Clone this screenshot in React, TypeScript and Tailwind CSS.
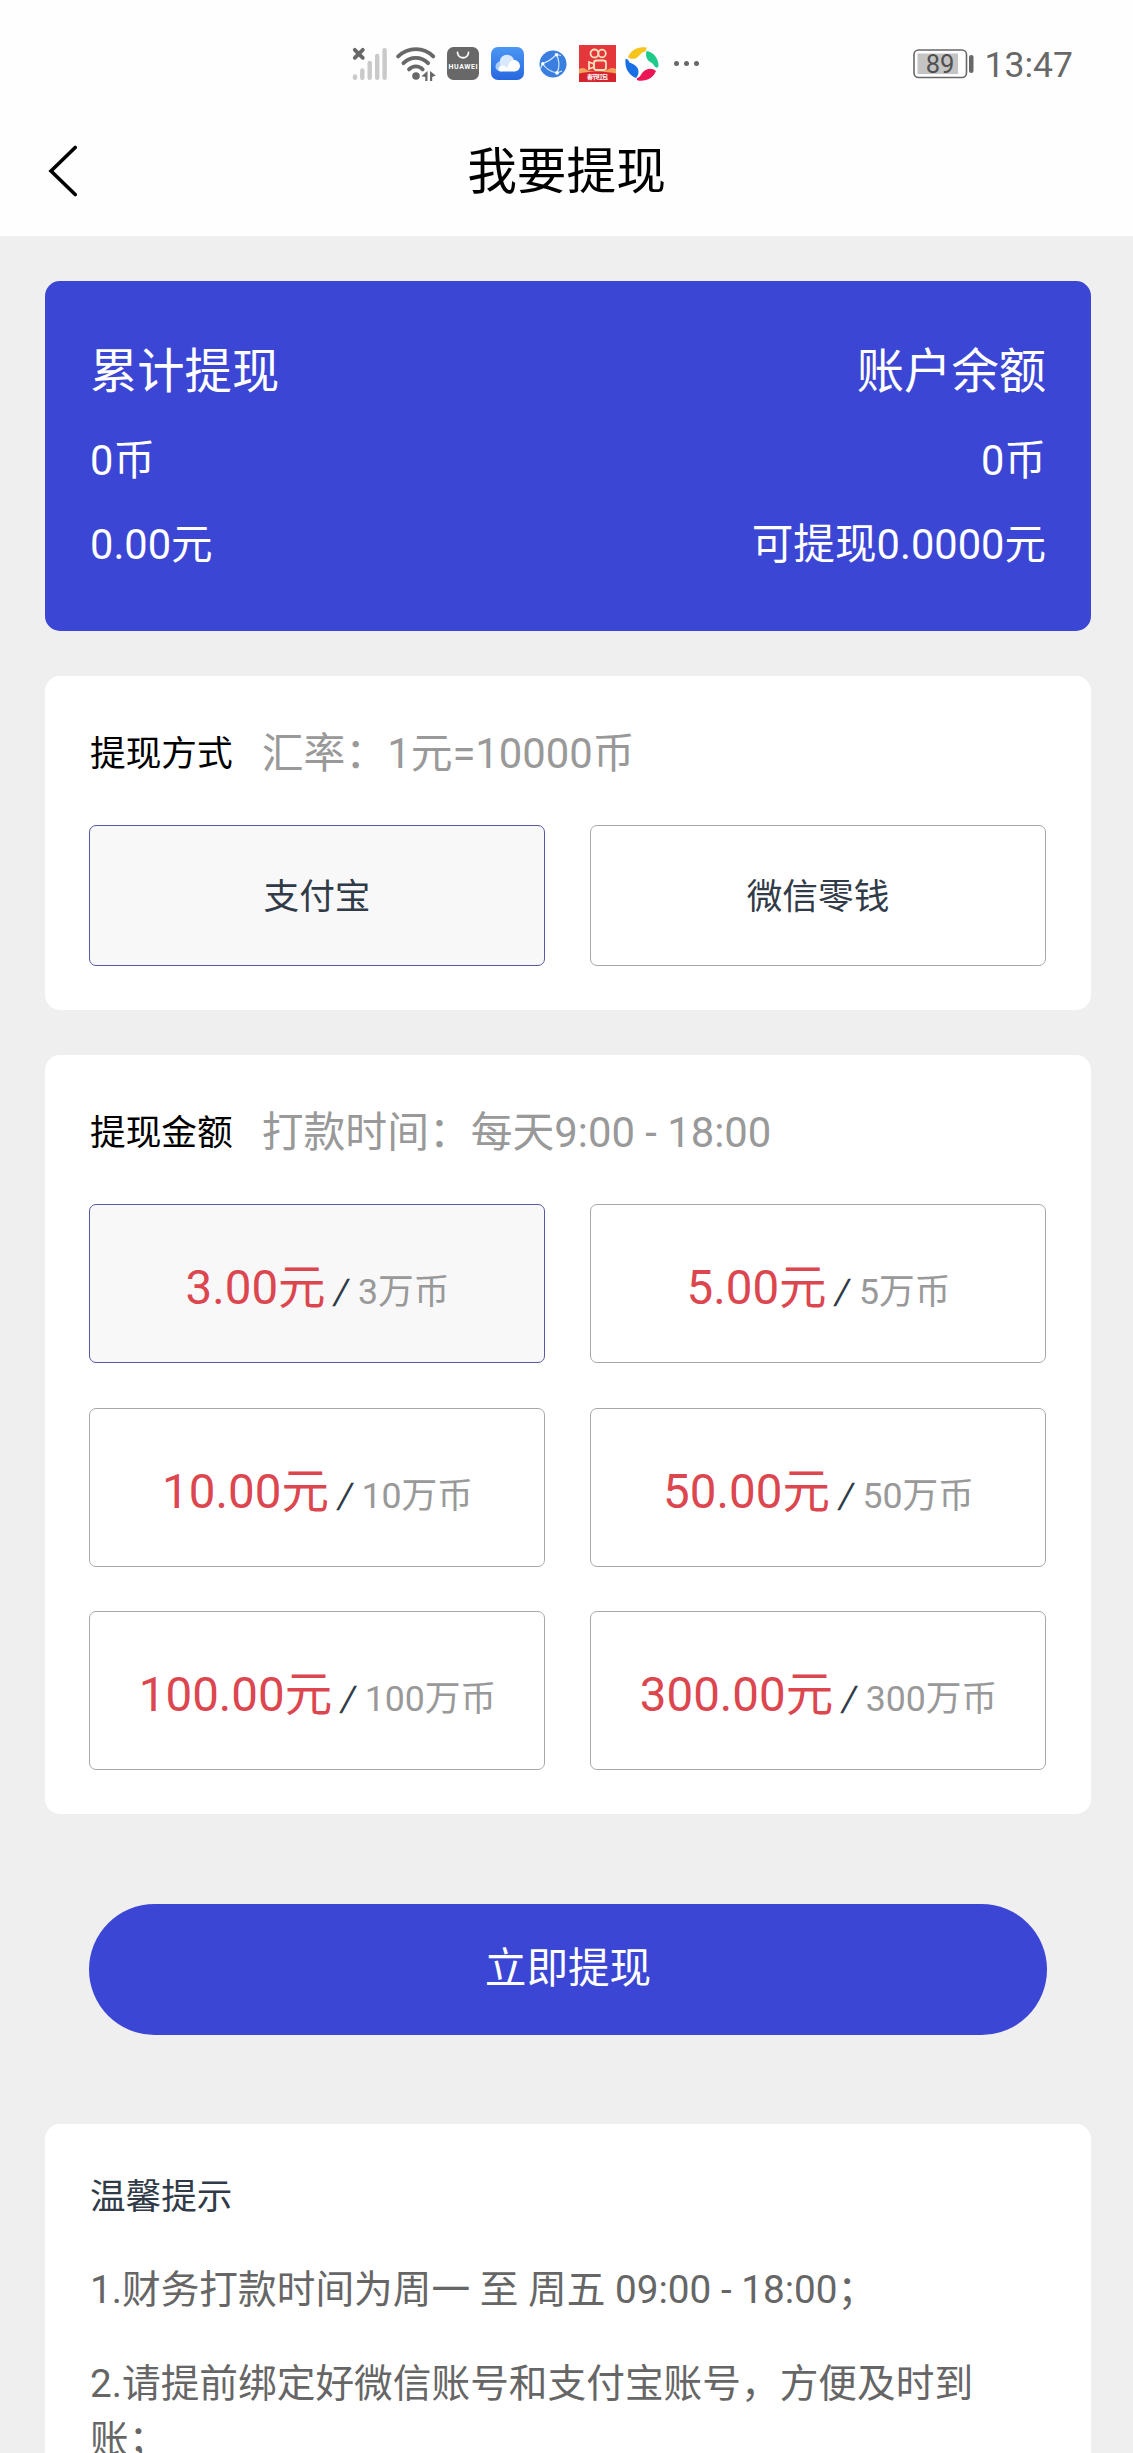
import { useState } from 'react'
import { clsx } from 'clsx'

const METHODS = ['支付宝', '微信零钱']

const AMOUNTS = [
  { price: '3.00元', coins: '3万币' },
  { price: '5.00元', coins: '5万币' },
  { price: '10.00元', coins: '10万币' },
  { price: '50.00元', coins: '50万币' },
  { price: '100.00元', coins: '100万币' },
  { price: '300.00元', coins: '300万币' },
]

const TIPS = [
  '1.财务打款时间为周一 至 周五 09:00 - 18:00；',
  '2.请提前绑定好微信账号和支付宝账号，方便及时到账；',
]

function SignalIcon() {
  return (
    <svg width="36" height="34" viewBox="0 0 36 34" fill="none" strokeLinecap="round">
      <g stroke="#c9c9c9" strokeWidth="4.4">
        <path d="M3 29.5v1.3M10.3 23.5v7.3M17.7 16v14.8M25.2 9v21.8M32.6 3.3v27.5" />
      </g>
      <path d="M2.8 2.8l8 8M10.8 2.8l-8 8" stroke="#686868" strokeWidth="3.8" />
    </svg>
  )
}

function WifiIcon() {
  return (
    <svg width="40" height="34" viewBox="0 0 40 34" fill="none">
      <g stroke="#686868" strokeWidth="3.8" strokeLinecap="round">
        <path d="M2.2 9.4C12-.4 28-.4 37.2 9.4" />
        <path d="M7.4 16.2c7-7 17.7-7 24.7 0" />
        <path d="M13 22.4c4-4 9.7-4 13.7 0" />
      </g>
      <circle cx="20" cy="29" r="3.8" fill="#686868" />
      <path d="M31.5 24v10h-2.2v-4l-3.8-.8z" fill="#686868" />
      <path d="M34 24v10h2.2v-4l3.5-1.5z" fill="#686868" />
    </svg>
  )
}

function HuaweiIcon() {
  return (
    <svg width="32" height="33" viewBox="0 0 32 33">
      <rect width="32" height="33" rx="6.5" fill="#686868" />
      <path d="M10.5 5.5c.4 7 10.6 7 11 0" fill="none" stroke="#fff" strokeWidth="1.8" strokeLinecap="round" />
      <text x="16" y="22" textAnchor="middle" textLength="29" className="font-[Roboto] text-[7px] font-bold" fill="#fff">
        HUAWEI
      </text>
    </svg>
  )
}

function CloudIcon() {
  return (
    <svg width="33" height="33" viewBox="0 0 33 33">
      <defs>
        <linearGradient id="cloudBg" x1="0" y1="0" x2="0" y2="1">
          <stop offset="0" stopColor="#4a97f3" />
          <stop offset="1" stopColor="#2868e0" />
        </linearGradient>
      </defs>
      <rect width="33" height="33" rx="7" fill="url(#cloudBg)" />
      <circle cx="9.5" cy="19.5" r="5" fill="#a9cdfa" />
      <circle cx="16" cy="15" r="7.3" fill="#d9e9fd" />
      <path d="M10 24.5c-4 0-3-7 2-6 2 .3 3 2 4 3 2-6 4-8.5 7.5-8.5 7 1 7.5 10.5.5 11.5z" fill="#fff" />
    </svg>
  )
}

function BrowserIcon() {
  return (
    <svg width="28" height="28" viewBox="0 0 28 28">
      <circle cx="14" cy="14" r="13.5" fill="#3a7fe0" />
      <g fill="none" stroke="#cfe4ff" strokeWidth="1.2">
        <path d="M3.5 13.5C9 12 14 8 17.500 4.500M17.500 4.500c3 6 3 13 .5 18.500M3.500 13.500C7 19 12 22 18 23" />
        <path d="M17.500 4.500l4.500 1M18 23l5-2M3.500 13.500l-2 5" />
      </g>
      <g fill="#fff">
        <circle cx="17.5" cy="4.8" r="1.8" />
        <circle cx="3.8" cy="13.7" r="1.7" />
        <circle cx="18" cy="22.8" r="1.9" />
      </g>
    </svg>
  )
}

function KwaiIcon() {
  return (
    <svg width="37" height="37" viewBox="0 0 37 37">
      <rect width="37" height="37" fill="#e5373b" />
      <path d="M0 24c3-2 6-1 8 1 4 2 16 2 20 0 3-2 6-3 9-1v6H0z" fill="#f0a35e" />
      <path d="M0 28.500c8-2.500 28-2.500 37 0V37H0z" fill="#d6242d" />
      <g fill="none" stroke="#fbe3bd" strokeWidth="1.8">
        <circle cx="15.5" cy="8.500" r="4" />
        <circle cx="23" cy="8.500" r="3.8" />
        <rect x="15" y="15.500" width="12" height="9.500" rx="2.500" />
        <path d="M15 19l-5-2v7l5-2z" />
      </g>
      <text x="18.5" y="34" textAnchor="middle" textLength="21" className="font-['Noto_Sans_CJK_SC'] text-[6px] font-bold" fill="#fff">
        春节红包
      </text>
    </svg>
  )
}

function PinwheelIcon() {
  return (
    <svg width="36" height="36" viewBox="0 0 36 36">
      <path d="M4 11C7 4 14 0 22.500 1.500c0 3-1 4-3 4.500-3 1-4 4-7 6-3 1.500-6.500 1-8.500-1z" fill="#f6c41c" />
      <path d="M22.500 5c7 1 12 7 12 15-.5 1.500-1.500 2-2.500 1.500-2-1-2-3-4-4.500-5-2-7-7-5.500-12z" fill="#1fca8b" />
      <path d="M32 25c-3 7-9 10.500-18 9.500-1.500-.5-1.500-2-.5-2.500 3-1 3-3 5-5.500 4-4 9-5 13.500-1.500z" fill="#ec1555" />
      <path d="M1.500 13c2-.5 3 1 4 3.500 5 1.500 9 5 9 9 0 3-1 5-2.500 6.500C4.500 29 .5 22 1.500 13z" fill="#1a6fe6" />
    </svg>
  )
}

function BatteryIcon() {
  return (
    <svg width="61" height="30" viewBox="0 0 61 30">
      <rect x="1" y="1" width="52.5" height="27.5" rx="4.5" fill="none" stroke="#686868" strokeWidth="1.6" />
      <rect x="4.5" y="4.5" width="40.5" height="20.5" fill="#c4c4c4" />
      <rect x="56" y="6" width="4.5" height="18" rx="2.2" fill="#686868" />
      <text x="27" y="23.7" textAnchor="middle" className="font-[Roboto] text-[25.5px]" fill="#505050">
        89
      </text>
    </svg>
  )
}

function StatusBar() {
  return (
    <div className="flex h-[127px] items-center pl-[352px] pr-[60px]">
      <SignalIcon />
      <div className="ml-2">
        <WifiIcon />
      </div>
      <div className="ml-[11px]">
        <HuaweiIcon />
      </div>
      <div className="ml-3">
        <CloudIcon />
      </div>
      <div className="ml-[15px]">
        <BrowserIcon />
      </div>
      <div className="ml-3">
        <KwaiIcon />
      </div>
      <div className="ml-2">
        <PinwheelIcon />
      </div>
      <div className="ml-[14px] flex gap-[5px]">
        <i className="size-[5px] rounded-full bg-[#686868]" />
        <i className="size-[5px] rounded-full bg-[#686868]" />
        <i className="size-[5px] rounded-full bg-[#686868]" />
      </div>
      <div className="ml-auto flex items-center gap-[11px]">
        <BatteryIcon />
        <span className="pt-[5px] text-[35.5px] leading-none text-[#686868]">13:47</span>
      </div>
    </div>
  )
}

function SectionTitle({ title, hint }: { title: string; hint: string }) {
  return (
    <div className="mb-[40px] flex h-[61px] items-center gap-[29px] whitespace-nowrap pl-px">
      <h2 className="text-[35.7px] text-black">{title}</h2>
      <span className="text-[41.8px] text-[#999]">{hint}</span>
    </div>
  )
}

interface OptionProps {
  active: boolean
  className?: string
  onClick: () => void
  children: React.ReactNode
}

function Option({ active, className, onClick, children }: OptionProps) {
  return (
    <button
      onClick={onClick}
      className={clsx(
        'flex items-center justify-center whitespace-nowrap rounded-[7px] border text-[35.7px] text-[#303b47]',
        active ? 'border-[#5a58a6] bg-[#f8f8f9]' : 'border-[#a8a8a8] bg-white',
        className
      )}
    >
      {children}
    </button>
  )
}

export default function App() {
  const [method, setMethod] = useState(0)
  const [amount, setAmount] = useState(0)

  return (
    <div
      lang="zh-CN"
      className="flex h-[2453px] w-[1133px] flex-col overflow-hidden bg-[#efefef] font-[Roboto,'Noto_Sans_CJK_SC',sans-serif]"
    >
      <header className="h-[236px] shrink-0 bg-[#fefefe]">
        <StatusBar />
        <div className="grid h-[88px] grid-cols-[1fr_auto_1fr] items-center px-12">
          <svg width="32" height="52" viewBox="0 0 32 52" fill="none" stroke="#000" strokeWidth="3.6" strokeLinecap="round">
            <path d="M27.2 2.5L3 26l24.2 23.5" />
          </svg>
          <h1 className="pt-[3px] text-[49.7px] leading-none text-black">我要提现</h1>
        </div>
      </header>

      <main className="flex flex-col pl-[45px] pr-[42px]">
        <section className="mt-[45px] flex h-[350px] justify-between rounded-[15px] bg-[#3c46d5] px-[45px] pt-[46px] text-[41.6px] text-white">
          <div>
            <p className="text-[47.3px] leading-[90px]">累计提现</p>
            <p className="leading-[87px]">0币</p>
            <p className="leading-[81px]">0.00元</p>
          </div>
          <div className="text-right">
            <p className="text-[47.3px] leading-[90px]">账户余额</p>
            <p className="leading-[87px]">0币</p>
            <p className="leading-[81px]">可提现0.0000元</p>
          </div>
        </section>

        <section className="mt-[45px] h-[334px] rounded-[15px] bg-white pl-[44px] pr-[45px] pt-[48px]">
          <SectionTitle title="提现方式" hint="汇率：1元=10000币" />
          <div className="grid grid-cols-2 gap-[45px]">
            {METHODS.map((name, i) => (
              <Option key={name} active={method === i} className="h-[141px] pt-[4px]" onClick={() => setMethod(i)}>
                {name}
              </Option>
            ))}
          </div>
        </section>

        <section className="mt-[45px] h-[759px] rounded-[15px] bg-white pl-[44px] pr-[45px] pt-[48px]">
          <SectionTitle title="提现金额" hint="打款时间：每天9:00 - 18:00" />
          <div className="grid grid-cols-2 gap-x-[45px] gap-y-[44.5px]">
            {AMOUNTS.map(({ price, coins }, i) => (
              <Option
                key={price}
                active={amount === i}
                className="h-[159px] pl-px pt-[11px]"
                onClick={() => setAmount(i)}
              >
                <span>
                  <span className="text-[47.5px] text-[#dc464f]">{price}</span>{' '}
                  <span className="inline-block -skew-x-[9deg]">/</span>{' '}
                  <span className="text-[#999]">{coins}</span>
                </span>
              </Option>
            ))}
          </div>
        </section>

        <button className="ml-[44px] mr-[44px] mt-[90px] h-[131px] rounded-full bg-[#3c46d5] text-[41.6px] text-white">
          立即提现
        </button>

        <section className="mt-[89px] h-[400px] rounded-[15px] bg-white px-[45px] pt-[46px]">
          <h2 className="text-[35.6px] leading-[54px] text-[#303b47]">温馨提示</h2>
          {TIPS.map((tip) => (
            <p key={tip} className="mt-[38px] text-[38.7px] leading-[56px] text-[#666]">
              {tip}
            </p>
          ))}
        </section>
      </main>
    </div>
  )
}
